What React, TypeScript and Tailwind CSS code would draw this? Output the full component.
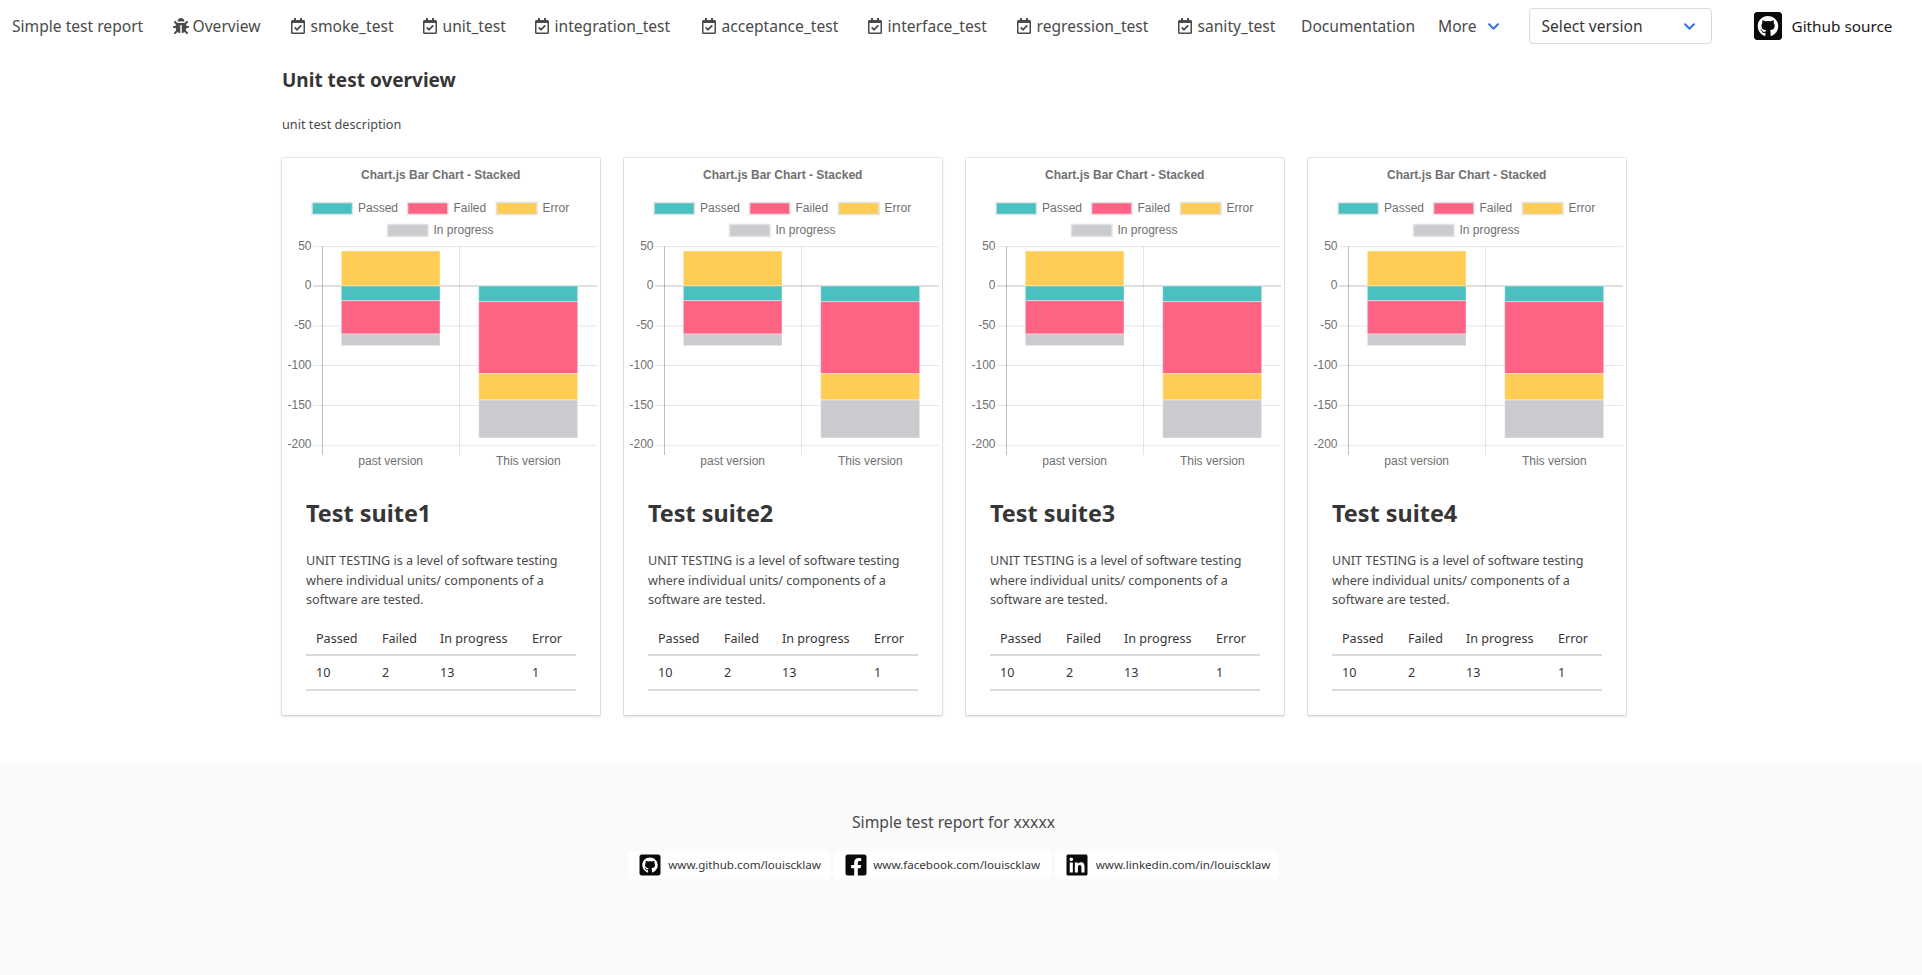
import React from "react";
import { FaBug, FaRegCalendarCheck, FaChevronDown, FaGithubSquare, FaFacebookSquare, FaLinkedin } from "react-icons/fa";

const navTests = [
  { label: "smoke_test", w: "w-[84px]" },
  { label: "unit_test", w: "w-[64px]" },
  { label: "integration_test", w: "w-[119px]" },
  { label: "acceptance_test", w: "w-[118px]" },
  { label: "interface_test", w: "w-[101px]" },
  { label: "regression_test", w: "w-[113px]" },
  { label: "sanity_test", w: "w-[79.5px]" },
];

const TEAL = "rgb(75,192,192)";
const RED = "rgb(255,99,132)";
const YELLOW = "rgb(255,205,86)";
const GRAY = "rgb(201,203,207)";

const ox = 282;
const oy = 158;
const ticks: [string, number][] = [["50", 246.7], ["0", 286], ["-50", 326], ["-100", 365.5], ["-150", 405.5], ["-200", 445.3]];
const legend = [
  { x: 312, y: 202.5, label: "Passed", color: TEAL },
  { x: 407.5, y: 202.5, label: "Failed", color: RED },
  { x: 496.5, y: 202.5, label: "Error", color: YELLOW },
  { x: 387.5, y: 224.5, label: "In progress", color: GRAY },
];
const bars = [
  { x: 341.3, w: 98.7, segs: [[251, 286, YELLOW], [286, 300.7, TEAL], [300.7, 334, RED], [334, 345.7, GRAY]] },
  { x: 478.7, w: 99, segs: [[286, 301.7, TEAL], [301.7, 373.7, RED], [373.7, 400, YELLOW], [400, 438, GRAY]] },
] as { x: number; w: number; segs: [number, number, string][] }[];

function Chart() {
  return (
    <svg width="318" height="317" viewBox={`${ox} ${oy} 318 317`} className="block" style={{ fontFamily: '"Liberation Sans", Arial, sans-serif' }}>
      <text x="440.7" y="178.5" textAnchor="middle" fontSize="12" fontWeight="700" fill="#707070">Chart.js Bar Chart - Stacked</text>
      {legend.map((l) => (
        <g key={l.label}>
          <rect x={l.x} y={l.y} width="40.5" height="12" fill={l.color} stroke="#e2e4e4" strokeWidth="1.5" />
          <text x={l.x + 46} y={l.y + 9} fontSize="12" fill="#707070">{l.label}</text>
        </g>
      ))}
      {ticks.map(([t, y]) => (
        <g key={t}>
          <line x1="313" x2="597" y1={y} y2={y} stroke={t === "0" ? "rgba(0,0,0,0.25)" : "rgba(0,0,0,0.1)"} />
          <text x="311.5" y={y + 3} textAnchor="end" fontSize="12" fill="#707070">{t}</text>
        </g>
      ))}
      <line x1="322.5" x2="322.5" y1="246.5" y2="455" stroke="rgba(0,0,0,0.25)" />
      <line x1="459.5" x2="459.5" y1="246.5" y2="455" stroke="rgba(0,0,0,0.1)" />
      {bars.map((b, i) => (
        <g key={i}>
          {b.segs.map(([a, z, c], j) => (
            <rect key={j} x={b.x} y={a} width={b.w} height={z - a} fill={c} stroke="rgba(255,255,255,0.4)" />
          ))}
        </g>
      ))}
      <text x="390.7" y="465" textAnchor="middle" fontSize="12" fill="#707070">past version</text>
      <text x="528.3" y="465" textAnchor="middle" fontSize="12" fill="#707070">This version</text>
    </svg>
  );
}

function Card({ n }: { n: number }) {
  return (
    <div className="w-[318px] h-[557px] bg-white rounded-[1px] shadow-[0_2px_3px_rgba(10,10,10,0.1),0_0_0_1px_rgba(10,10,10,0.1)]">
      <Chart />
      <div className="px-6 pt-[23px]">
        <h3 className="text-[23.4px] leading-[30px] font-bold text-[#363636] mb-[23px]">Test suite{n}</h3>
        <p className="text-[12.6px] leading-[19.6px] text-[#4a4a4a] mb-3 whitespace-pre-line">
          {"UNIT TESTING is a level of software testing\nwhere individual units/ components of a\nsoftware are tested."}
        </p>
        <table className="w-[270px] table-fixed text-[12.6px] text-[#363636]">
          <colgroup>
            <col className="w-[66px]" />
            <col className="w-[58px]" />
            <col className="w-[92px]" />
            <col className="w-[54px]" />
          </colgroup>
          <thead>
            <tr className="h-[33px] border-b-2 border-[#dbdbdb]">
              <th className="pl-[10px] pt-1 font-normal text-left whitespace-nowrap">Passed</th>
              <th className="pl-[10px] pt-1 font-normal text-left whitespace-nowrap">Failed</th>
              <th className="pl-[10px] pt-1 font-normal text-left whitespace-nowrap">In progress</th>
              <th className="pl-[10px] pt-1 font-normal text-left whitespace-nowrap">Error</th>
            </tr>
          </thead>
          <tbody>
            <tr className="h-[35px] border-b-2 border-[#dbdbdb]">
              <td className="pl-[10px] pt-[2px]">10</td>
              <td className="pl-[10px] pt-[2px]">2</td>
              <td className="pl-[10px] pt-[2px]">13</td>
              <td className="pl-[10px] pt-[2px]">1</td>
            </tr>
          </tbody>
        </table>
      </div>
    </div>
  );
}

function FooterLink({ icon, text, w, gap }: { icon: React.ReactNode; text: string; w: string; gap: string }) {
  return (
    <a className={`flex items-center h-[28px] bg-white rounded-[4px] pl-[10px] ${w} ${gap} text-[11.6px] text-[#363636] whitespace-nowrap`}>
      {icon}
      {text}
    </a>
  );
}

export default function App() {
  return (
    <div className="min-h-screen flex flex-col bg-white text-[#4a4a4a]" style={{ fontFamily: '"Noto Sans", sans-serif' }}>
      <nav className="h-[52px] flex items-center text-[15.6px] leading-[25px] whitespace-nowrap">
        <a className="px-3 w-[155.5px]">Simple test report</a>
        <a className="flex items-center px-3">
          <span className="w-6 flex justify-start pl-[5px]"><FaBug size={16} /></span>
          <span className="w-[71px] pl-px">Overview</span>
        </a>
        {navTests.map((t) => (
          <a key={t.label} className="flex items-center px-3">
            <span className="w-6 flex justify-start pl-[3px]"><FaRegCalendarCheck size={16} /></span>
            <span className={t.w}>{t.label}</span>
          </a>
        ))}
        <a className="px-3 w-[137px]">Documentation</a>
        <a className="flex items-center pl-3">
          <span className="w-[48.5px]">More</span>
          <FaChevronDown size={13} className="text-[#3273dc]" />
        </a>
        <div className="ml-[29px] w-[183px] h-9 flex items-center justify-between border border-[#dbdbdb] rounded-[4px] pl-[12px] pr-[15px] text-[#363636]">
          <span>Select version</span>
          <FaChevronDown size={13} className="text-[#3273dc]" />
        </div>
        <a className="ml-[40px] flex items-center text-[#1a1a1a] text-[15.3px]">
          <FaGithubSquare size={32} className="text-[#0a0a0a]" />
          <span className="ml-[8px]">Github source</span>
        </a>
      </nav>

      <main className="pl-[282px] pt-4 pb-12">
        <h1 className="text-[19px] leading-[25px] font-bold text-[#363636]">Unit test overview</h1>
        <p className="mt-[23px] text-[12.7px] leading-[17px] text-[#4a4a4a]">unit test description</p>
        <div className="mt-[25px] flex gap-6">
          <Card n={1} />
          <Card n={2} />
          <Card n={3} />
          <Card n={4} />
        </div>
      </main>

      <footer className="flex-1 bg-[#fafafa] pt-[47px] pr-[15px] flex flex-col items-center">
        <p className="text-[15.7px] leading-6 text-[#4a4a4a]">Simple test report for xxxxx</p>
        <div className="mt-[17px] flex gap-1">
          <FooterLink icon={<FaGithubSquare size={24} className="text-[#0a0a0a]" />} text="www.github.com/louiscklaw" w="w-[202px]" gap="gap-[6px]" />
          <FooterLink icon={<FaFacebookSquare size={24} className="text-[#0a0a0a]" />} text="www.facebook.com/louiscklaw" w="w-[216.5px]" gap="gap-[5px]" />
          <FooterLink icon={<FaLinkedin size={24} className="text-[#0a0a0a]" />} text="www.linkedin.com/in/louiscklaw" w="w-[224px]" gap="gap-[7px]" />
        </div>
      </footer>
    </div>
  );
}
